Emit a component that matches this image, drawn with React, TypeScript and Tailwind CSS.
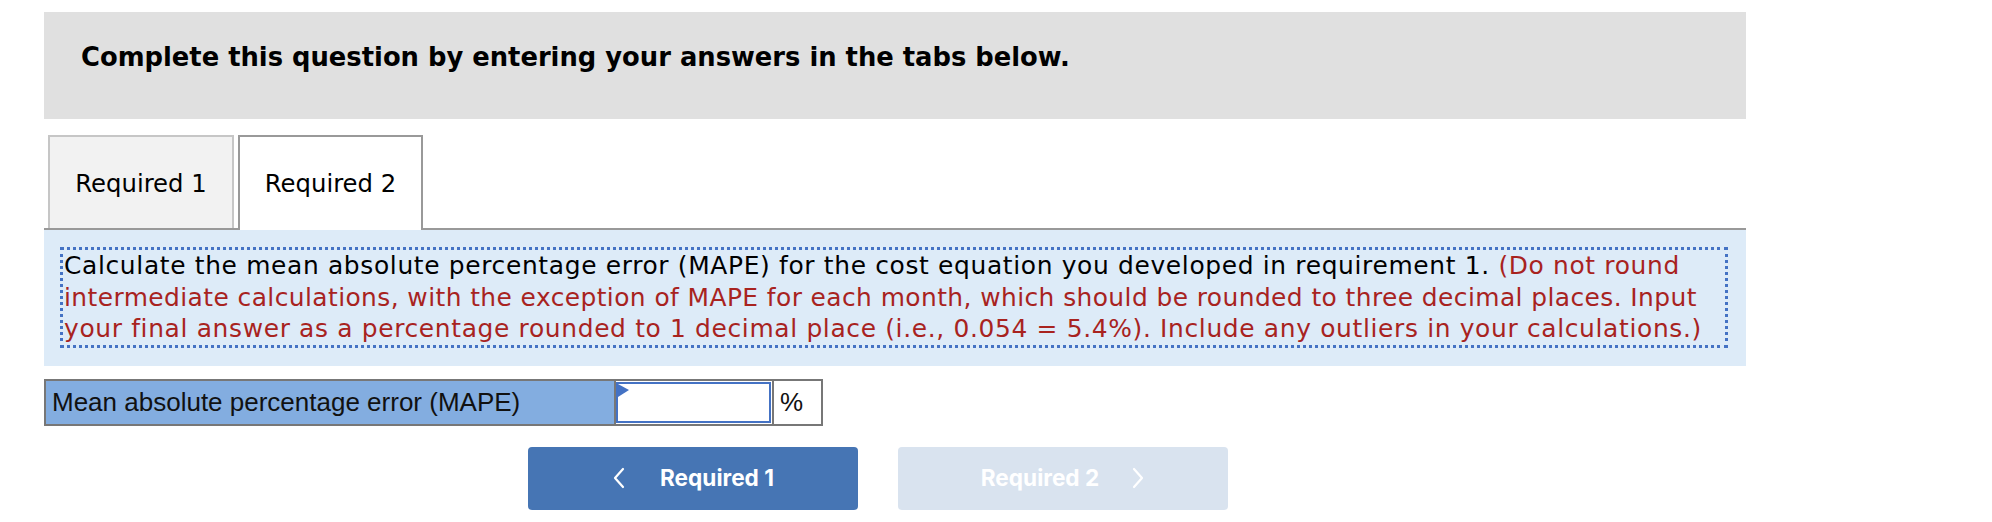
import React from "react";

function ChevronLeft() {
  return (
    <svg width="14" height="22" viewBox="0 0 14 22" fill="none">
      <polyline points="11,2 3,11 11,20" stroke="white" strokeWidth="2.2" strokeLinecap="round" strokeLinejoin="round" />
    </svg>
  );
}

function ChevronRight() {
  return (
    <svg width="14" height="22" viewBox="0 0 14 22" fill="none">
      <polyline points="3,2 11,11 3,20" stroke="white" strokeWidth="2.2" strokeLinecap="round" strokeLinejoin="round" />
    </svg>
  );
}

export default function App() {
  return (
    <div className="w-[1992px] h-[522px] bg-white overflow-hidden">
      <div className="ml-[44px] mt-[12px] w-[1702px] flex flex-col">
        {/* Header */}
        <div
          className="h-[107px] bg-[#e0e0e0] pl-[37px] pt-[30px] text-[25.8px] leading-[30px] font-bold text-black"
          style={{ fontFamily: '"DejaVu Sans", Verdana, sans-serif' }}
        >
          Complete this question by entering your answers in the tabs below.
        </div>

        {/* Tabs */}
        <div
          className="mt-[16px] flex items-end gap-[4px] pl-[4px] border-b-2 border-[#999999] h-[95px]"
          style={{ fontFamily: '"DejaVu Sans", Verdana, sans-serif' }}
        >
          <div className="w-[186px] h-[93px] bg-[#f2f2f2] border-2 border-b-0 border-[#c6c6c6] flex items-center justify-center text-[24.3px] text-black pt-[4px]">
            Required 1
          </div>
          <div className="w-[185px] h-[95px] mb-[-2px] bg-white border-2 border-b-0 border-[#999999] flex items-center justify-center text-[24.3px] text-black pt-[2px]">
            Required 2
          </div>
        </div>

        {/* Panel */}
        <div className="bg-[#ddebf8] pt-[17px] pb-[18px] pl-[16px] pr-[18px]">
          <div
            className="border-[3px] border-dotted border-[#4472c4] text-[24.9px] leading-[31.5px] text-black pl-[1px] whitespace-nowrap overflow-hidden flex flex-col"
            style={{ fontFamily: '"DejaVu Sans", Verdana, sans-serif' }}
          >
            <div className="tracking-[0.66px]">
              Calculate the mean absolute percentage error (MAPE) for the cost equation you developed in requirement 1.{" "}
              <span className="text-[#a8231f]">(Do not round</span>
            </div>
            <div className="tracking-[0.42px] text-[#a8231f]">
              intermediate calculations, with the exception of MAPE for each month, which should be rounded to three decimal places. Input
            </div>
            <div className="tracking-[0.66px] text-[#a8231f]">
              your final answer as a percentage rounded to 1 decimal place (i.e., 0.054 = 5.4%). Include any outliers in your calculations.)
            </div>
          </div>
        </div>

        {/* Answer row */}
        <div
          className="mt-[13px] w-[779px] h-[47px] border-2 border-[#777777] flex"
          style={{ fontFamily: '"Liberation Sans", Arial, sans-serif' }}
        >
          <div className="w-[570px] h-full bg-[#83ade0] border-r-2 border-[#777777] flex items-center pl-[6px] text-[26px] text-[#111]">
            Mean absolute percentage error (MAPE)
          </div>
          <div className="w-[158px] h-full p-[1px] pl-0 bg-white border-r-2 border-[#777777]">
            <div className="relative w-full h-full border-2 border-[#4472c4] bg-white">
              <svg className="absolute left-0 top-0" width="12" height="14" viewBox="0 0 12 14">
                <polygon points="0,0 11,6 0,13" fill="#4472c4" />
              </svg>
            </div>
          </div>
          <div className="flex-1 h-full bg-white flex items-center pl-[6px] text-[26px] text-[#111]">%</div>
        </div>

        {/* Buttons */}
        <div className="mt-[21px] flex gap-[40px] pl-[484px]" style={{ fontFamily: 'Inter, "Liberation Sans", sans-serif' }}>
          <div className="w-[330px] h-[63px] rounded-[4px] bg-[#4675b4] flex items-center justify-center gap-[34px] text-white text-[22.6px] font-bold">
            <ChevronLeft />
            <span>Required 1</span>
          </div>
          <div className="w-[330px] h-[63px] rounded-[4px] bg-[#d9e3ef] flex items-center justify-center gap-[32px] text-white text-[22.6px] font-bold">
            <span>Required 2</span>
            <ChevronRight />
          </div>
        </div>
      </div>
    </div>
  );
}
